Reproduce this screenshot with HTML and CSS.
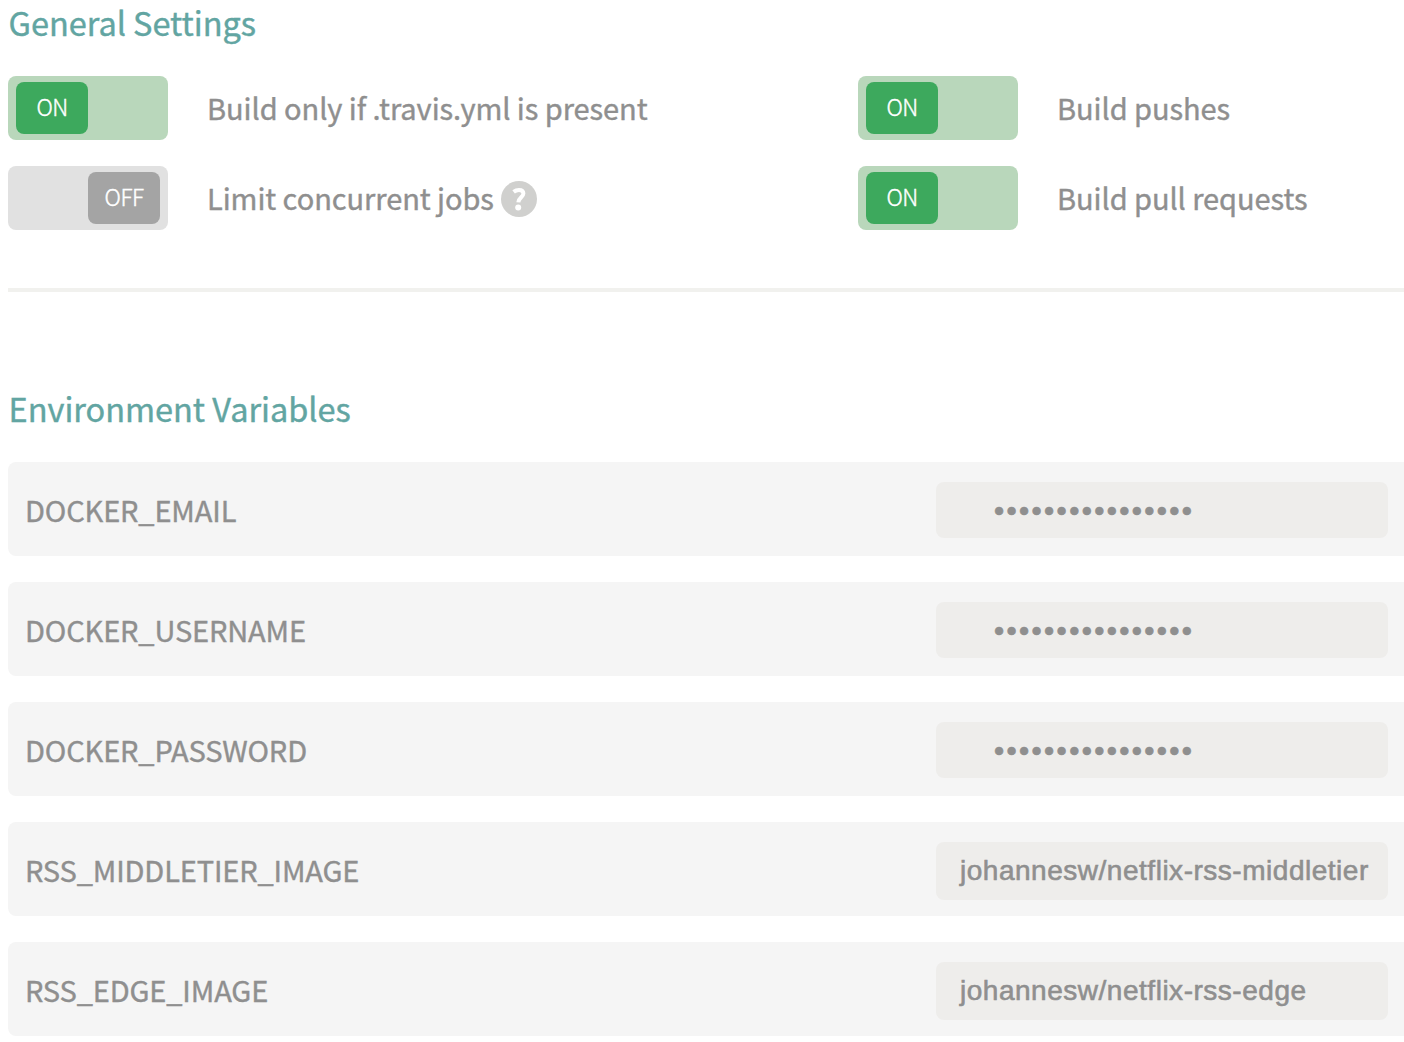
FILE: index.html
```
<!DOCTYPE html>
<html lang="en">
<head>
<meta charset="utf-8">
<title>Settings</title>
<link rel="stylesheet" href="styles.css">
</head>
<body>
<main class="settings">
  <section class="general">
    <h2 class="title">General Settings</h2>
    <div class="options">
      <div class="option">
        <div class="switch on"><span class="knob">ON</span></div>
        <span class="label">Build only if .travis.yml is present</span>
      </div>
      <div class="option">
        <div class="switch on"><span class="knob">ON</span></div>
        <span class="label">Build pushes</span>
      </div>
      <div class="option">
        <div class="switch off"><span class="knob">OFF</span></div>
        <span class="label">Limit concurrent jobs</span>
        <svg class="help" viewBox="0 0 36 36" width="36" height="36" role="img" aria-label="Help">
          <circle cx="18" cy="18" r="18" fill="#d0d0ce"/>
          <path d="M12.6 10.9C14.2 9.6 16 8.9 18 8.9C20.9 8.9 22.4 10.3 22.4 12.6C22.4 16 17.5 16.6 17.3 21.4" fill="none" stroke="#fff" stroke-width="4"/>
          <circle cx="17.2" cy="26.6" r="3" fill="#fff"/>
        </svg>
      </div>
      <div class="option">
        <div class="switch on"><span class="knob">ON</span></div>
        <span class="label">Build pull requests</span>
      </div>
    </div>
  </section>
  <section class="env">
    <h2 class="title">Environment Variables</h2>
    <ul class="vars">
      <li class="var"><span class="name">DOCKER_EMAIL</span><span class="value masked">••••••••••••••••</span></li>
      <li class="var"><span class="name">DOCKER_USERNAME</span><span class="value masked">••••••••••••••••</span></li>
      <li class="var"><span class="name">DOCKER_PASSWORD</span><span class="value masked">••••••••••••••••</span></li>
      <li class="var"><span class="name">RSS_MIDDLETIER_IMAGE</span><span class="value">johannesw/netflix-rss-middletier</span></li>
      <li class="var"><span class="name">RSS_EDGE_IMAGE</span><span class="value">johannesw/netflix-rss-edge</span></li>
    </ul>
  </section>
</main>
</body>
</html>
```
FILE: styles.css
```
* { box-sizing: border-box; }
body {
  margin: 0;
  background: #fff;
  color: #8f8f8f;
  font-family: "Noto Sans CJK SC", "Noto Sans", sans-serif;
  overflow: hidden;
}
.settings { padding-left: 8px; }
.title {
  margin: 0;
  height: 48px;
  padding-left: 0.6px;
  line-height: 44px;
  font-size: 32.5px;
  font-weight: 400;
  letter-spacing: -0.03px;
  color: #62a5a2;
  -webkit-text-stroke: 0.4px #62a5a2;
  white-space: nowrap;
}
.general {
  height: 292px;
  border-bottom: 4px solid #f1f1ee;
}
.options {
  display: grid;
  grid-template-columns: 850px 1fr;
  row-gap: 26px;
  padding-top: 28px;
}
.option { display: flex; align-items: flex-start; height: 64px; }
.switch {
  display: flex;
  flex: none;
  width: 160px;
  height: 64px;
  padding: 6px 8px;
  border-radius: 8px;
  margin-right: 39px;
}
.switch.on { background: #b9d7bb; }
.switch.off { background: #e1e1e1; justify-content: flex-end; }
.knob {
  width: 72px;
  height: 52px;
  border-radius: 8px;
  line-height: 48px;
  text-align: center;
  font-size: 22.5px;
  font-weight: 300;
  letter-spacing: -0.5px;
  color: #fff;
  -webkit-text-stroke: 0.4px #fff;
}
.on .knob { background: #3da95d; }
.off .knob { background: #a4a4a4; }
.label, .name {
  font-size: 29px;
  white-space: nowrap;
  -webkit-text-stroke: 0.4px #8f8f8f;
}
.label {
  line-height: 62px;
  letter-spacing: -0.06px;
}
.help { margin: 15px 0 0 7px; flex: none; }
.env { padding-top: 94px; }
.vars { margin: 0; padding: 28px 0 0; list-style: none; display: grid; row-gap: 26px; }
.var {
  display: flex;
  justify-content: space-between;
  align-items: flex-start;
  height: 94px;
  padding: 20px 16px 0 17px;
  background: #f5f5f5;
  border-radius: 8px 0 0 8px;
}
.name {
  line-height: 54px;
  letter-spacing: -0.14px;
}
.value {
  width: 452px;
  height: 58px;
  padding-left: 24px;
  border-radius: 8px;
  background: #eeedeb;
  font-family: "Liberation Sans", Arial, sans-serif;
  font-size: 28px;
  letter-spacing: 0.52px;
  line-height: 57px;
  white-space: nowrap;
  -webkit-text-stroke: 0.6px #8f8f8f;
}
.masked {
  height: 56px;
  padding-left: 58px;
  font-size: 29px;
  line-height: 59px;
  letter-spacing: 2.37px;
}
```
